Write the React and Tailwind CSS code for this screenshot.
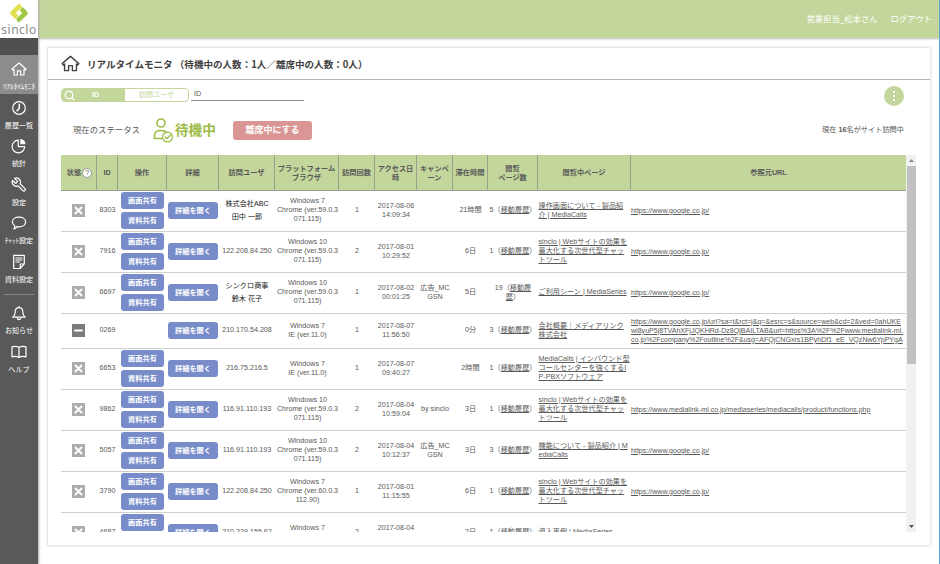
import React from "react";

const COLS =
  "grid grid-cols-[36px_21px_49px_52px_56px_64px_36px_42px_36px_35px_50px_93px_275px]";

const WEB = ["sinclo | Webサイトの効果を", "最大化する次世代型チャッ", "トツール"];
const GOOGLE = ["https://www.google.co.jp/"];
const CH59 = ["Chrome (ver.59.0.3", "071.115)"];

const ROWS = [
  { id: "8303", user: ["株式会社ABC", "田中 一郎"], named: true, pf: ["Windows 7", ...CH59], n: "1", at: ["2017-08-06", "14:09:34"], camp: [], stay: "21時間", pages: "5", page: ["操作画面について - 製品紹", "介 | MediaCalls"], ref: GOOGLE },
  { id: "7916", user: ["122.208.84.250"], pf: ["Windows 10", ...CH59], n: "2", at: ["2017-08-01", "10:29:52"], camp: [], stay: "6日", pages: "1", page: WEB, ref: GOOGLE },
  { id: "6697", user: ["シンクロ商事", "鈴木 花子"], named: true, pf: ["Windows 10", ...CH59], n: "1", at: ["2017-08-02", "00:01:25"], camp: ["広告_MC", "GSN"], stay: "5日", pages: "19", page: ["ご利用シーン | MediaSeries"], ref: GOOGLE },
  { id: "0269", away: true, user: ["210.170.54.208"], pf: ["Windows 7", "IE (ver.11.0)"], n: "1", at: ["2017-08-07", "11:56:50"], camp: [], stay: "0分", pages: "3", page: ["会社概要｜メディアリンク", "株式会社"], ref: ["https://www.google.co.jp/url?sa=t&rct=j&q=&esrc=s&source=web&cd=2&ved=0ahUKE", "wi8yuP5j8TVAhXFjJQKHRd-Dz8QjBAILTAB&url=https%3A%2F%2Fwww.medialink-ml.", "co.jp%2Fcompany%2Foutline%2F&usg=AFQjCNGxrs1BPyhDf1_eE_VQzNw6YpPYgA"] },
  { id: "6653", user: ["216.75.216.5"], pf: ["Windows 7", "IE (ver.11.0)"], n: "1", at: ["2017-08-07", "09:40:27"], camp: [], stay: "2時間", pages: "1", page: ["MediaCalls | インバウンド型", "コールセンターを強くするI", "P-PBXソフトウェア"], ref: [] },
  { id: "9862", user: ["116.91.110.193"], pf: ["Windows 10", ...CH59], n: "2", at: ["2017-08-04", "10:59:04"], camp: ["by sinclo"], stay: "3日", pages: "1", page: WEB, ref: ["https://www.medialink-ml.co.jp/mediaseries/mediacalls/product/functions.php"] },
  { id: "5057", user: ["116.91.110.193"], pf: ["Windows 10", ...CH59], n: "2", at: ["2017-08-04", "10:12:37"], camp: ["広告_MC", "GSN"], stay: "3日", pages: "3", page: ["機能について - 製品紹介 | M", "ediaCalls"], ref: GOOGLE },
  { id: "3790", user: ["122.208.84.250"], pf: ["Windows 7", "Chrome (ver.60.0.3", "112.90)"], n: "1", at: ["2017-08-01", "11:15:55"], camp: [], stay: "6日", pages: "1", page: WEB, ref: GOOGLE },
  { id: "4687", last: true, user: ["210.229.155.62"], pf: ["Windows 7"], n: "2", at: ["2017-08-04"], camp: [], stay: "2日", pages: "1", page: ["導入事例 | MediaSeries"], ref: [] },
];

const HEADERS = [
  ["ID"], ["操作"], ["詳細"], ["訪問ユーザ"], ["プラットフォーム", "ブラウザ"], ["訪問回数"],
  ["アクセス日", "時"], ["キャンペ", "ーン"], ["滞在時間"], ["閲覧", "ページ数"], ["閲覧中ページ"], ["参照元URL"],
];

function Lines({ lines, className = "" }) {
  return (
    <div className={`flex flex-col justify-center whitespace-nowrap ${className}`}>
      {lines.map((l, i) => <div key={i}>{l}</div>)}
    </div>
  );
}

function Svg({ className, children, vb = "0 0 16 16", sw = 1.2 }) {
  return (
    <svg className={className} viewBox={vb} fill="none" stroke="currentColor" strokeWidth={sw} strokeLinecap="round" strokeLinejoin="round">
      {children}
    </svg>
  );
}

const home = <path d="M1 8 8 2l7 6-1 1.2-1-.8V14H9.6V9.8H6.4V14H3V8.4l-1 .8z" />;

const ICONS = {
  home,
  clock: <><circle cx="8" cy="8" r="6.3" /><path d="M8.3 4.3v4L6 10.8" strokeWidth="1.5" /></>,
  pie: <><path d="M7.3 2.2a6.3 6.3 0 1 0 6.4 6.4H7.3z" /><path d="M9.3 1a5.6 5.6 0 0 1 5.2 5.3H9.3z" fill="currentColor" stroke="none" /></>,
  wrench: (
    <g transform="translate(16.400 -0.400) scale(-0.690 0.690)" strokeWidth="1.800">
      <path d="M14.700 6.300a1 1 0 0 0 0 1.400l1.600 1.600a1 1 0 0 0 1.400 0l3.770-3.770a6 6 0 0 1-7.940 7.940l-6.910 6.910a2.120 2.120 0 0 1-3-3l6.910-6.910a6 6 0 0 1 7.940-7.940l-3.760 3.760z" />
    </g>
  ),
  chat: <path d="M8 2.2c3.8 0 6.6 2 6.6 4.8S11.8 11.8 8 11.8c-.7 0-1.4-.1-2-.2-.8 1.3-1.7 2-3.1 2.3.7-1 .9-2 .8-3.2C2.3 9.8 1.4 8.5 1.4 7c0-2.8 2.8-4.8 6.6-4.8z" />,
  doc: <><path d="M2.7 1.3h10.6v8.500l-4.200 4.700H2.700zM9.200 14.300V10h4" /><path d="M4.800 4h6.300M4.800 6h6.300M4.800 8h3.800" strokeWidth="1" /></>,
  bell: <><path d="M8 1.300v1.200M8 2.600c-2.600 0-3.800 2-3.800 4.300 0 2.700-.7 3.600-2.400 5.300h12.400c-1.700-1.700-2.400-2.600-2.400-5.300 0-2.300-1.200-4.300-3.800-4.300z" /><path d="M6.300 13c.2 2.200 3.200 2.200 3.400 0" /></>,
  book: <path d="M8 3.500C6.300 2.300 3.600 2.200 1 2.800v10c2.600-.6 5.300-.4 7 .7 1.700-1.100 4.400-1.300 7-.7v-10c-2.600-.6-5.300-.5-7 .7zm0 0v10" />,
};

function NavItem({ icon, label, active }) {
  return (
    <div className={`flex h-[38.500px] shrink-0 flex-col items-center pt-[6px] text-white ${active ? "bg-[#8c8c8c]" : ""}`}>
      <Svg className="size-4 shrink-0">{ICONS[icon]}</Svg>
      <span className="mt-[5px] whitespace-nowrap text-[7.100px] leading-[10px]">{label}</span>
    </div>
  );
}

function Button({ children, className }) {
  return (
    <div className={`flex h-[17px] items-center justify-center whitespace-nowrap rounded-[3px] bg-[#788cca] text-[7.200px] font-bold text-white ${className}`}>
      {children}
    </div>
  );
}

function Row({ r }) {
  return (
    <div className={`${COLS} shrink-0 border-b border-[#cfcfcf] pb-[1px] text-center text-[7.150px] leading-[9px] ${r.away ? "h-[35px]" : "h-[41px]"}`}>
      <div className="flex items-center justify-center pb-[1px] pr-[1px]">
        <div className={`flex size-[13px] items-center justify-center text-white ${r.away ? "bg-[#7b7b7b]" : "bg-[#acacac]"}`}>
          <Svg className="size-[11px]" vb="0 0 11 11" sw={2}>
            {r.away ? <path d="M2 5.500h7" /> : <path d="M2.500 2.500l6 6M8.500 2.500l-6 6" />}
          </Svg>
        </div>
      </div>
      <Lines lines={[r.id]} />
      <div className={`flex flex-col items-center gap-[3px] pb-[1px] ${r.last ? "pt-[1px]" : "justify-center"}`}>
        {!r.away && <Button className="w-[43px]">画面共有</Button>}
        {!r.away && !r.last && <Button className="w-[43px]">資料共有</Button>}
      </div>
      <div className="flex items-center justify-center pb-[1px]"><Button className="w-[50px]">詳細を開く</Button></div>
      <Lines lines={r.user} className={r.named ? "leading-[13px] text-[#222]" : ""} />
      <Lines lines={r.pf} className={r.last ? "pb-[9px] pl-[1px]" : "pl-[1px]"} />
      <Lines lines={[r.n]} />
      <Lines lines={r.at} className={r.last ? "pb-[9px]" : ""} />
      <Lines lines={r.camp} />
      <Lines lines={[r.stay]} />
      <div className="flex flex-col justify-center whitespace-nowrap">
        {r.pages === "19" ? (
          <><div>19（<u>移動履</u></div><div><u>歴</u>）</div></>
        ) : (
          <div>{r.pages}（<u>移動履歴</u>）</div>
        )}
      </div>
      <Lines lines={r.page} className="items-start pl-[0.500px] text-left underline" />
      <Lines lines={r.ref} className="items-start pb-[1px] text-left text-[7.070px] underline" />
    </div>
  );
}

export default function App() {
  return (
    <div className="flex h-[564px] w-[940px] overflow-hidden border-r border-[#5fa3d8] bg-white font-['Liberation_Sans','Noto_Sans_CJK_JP',sans-serif] text-[#595959]">
      <aside className="z-10 flex w-[38px] shrink-0 flex-col bg-[#595959] shadow-[1px_0_2px_#aaa]">
        <div className="flex h-[38px] shrink-0 flex-col items-center bg-white pt-[3px]">
          <svg className="h-[20px] w-[20px] shrink-0" viewBox="0 0 20 20" fill="none" strokeWidth="4.600" strokeLinejoin="round">
            <path d="M12 2.600 10.300 3.300 3.500 10l4.300 4.400" stroke="#e2e04c" />
            <path d="M12.200 5.600 16.500 10l-6.800 6.700-1.700.7" stroke="#a3c846" />
          </svg>
          <span className="font-['Noto_Sans'] text-[12px] leading-[13px] tracking-[0.500px] text-[#8c8c8c]">sinclo</span>
        </div>
        <div className="h-[17px] shrink-0 bg-[#505050]" />
        <NavItem icon="home" label="ﾘｱﾙﾀｲﾑﾓﾆﾀ" active />
        <NavItem icon="clock" label="履歴一覧" />
        <NavItem icon="pie" label="統計" />
        <NavItem icon="wrench" label="設定" />
        <NavItem icon="chat" label="ﾁｬｯﾄ設定" />
        <NavItem icon="doc" label="資料設定" />
        <div className="mx-1 mb-[4px] mt-[8px] h-px shrink-0 bg-[#858585]" />
        <NavItem icon="bell" label="お知らせ" />
        <NavItem icon="book" label="ヘルプ" />
      </aside>
      <div className="flex min-w-0 flex-1 flex-col">
        <header className="flex h-[38px] shrink-0 items-center justify-end gap-[13px] bg-[#c3d69b] pr-[7px] text-[8.300px] text-white shadow-[0_1px_2px_#bbb]">
          <span>営業担当_松本さん</span>
          <span>ログアウト</span>
        </header>
        <main className="ml-[10px] mt-[10px] flex h-[497px] w-[882px] shrink-0 flex-col bg-white shadow-[0_0_2px_1px_#dcdcdc]">
          <div className="flex h-8 shrink-0 items-center border-b border-[#b5b5b5] pl-[13px] text-[#404040]">
            <Svg className="size-[19px]" sw={1.2}>{home}</Svg>
            <h1 className="ml-[7px] whitespace-nowrap font-['Noto_Sans_CJK_JP',sans-serif] text-[9.550px] font-bold leading-4">リアルタイムモニタ （待機中の人数：1人／離席中の人数：0人）</h1>
          </div>
          <div className="flex h-[26px] shrink-0 items-start pl-[13px] pr-[26px] pt-[6px]">
            <div className="mt-[2px] flex h-[14px] w-[128px] overflow-hidden rounded-[4px] border border-[#c3d69b] text-[7px] text-[#c3d69b]">
              <div className="flex w-[63px] items-center bg-[#c3d69b] font-bold text-white">
                <Svg className="ml-[2px] size-[11px]" vb="0 0 11 11" sw={1.3}><circle cx="5" cy="5" r="3.8" /><path d="M8 8l2 2" /></Svg>
                <span className="ml-[17px]">ID</span>
              </div>
              <div className="flex flex-1 items-center justify-center">訪問ユーザ</div>
            </div>
            <div className="ml-[2px] h-[15px] w-[113px] border-b border-[#8c8c8c] pl-[3px] text-[7.200px] leading-[15px]">ID</div>
            <div className="ml-auto flex size-5 flex-col items-center justify-center gap-[2px] rounded-full bg-[#c3d69b]">
              <i className="size-[2px] bg-white" /><i className="size-[2px] bg-white" /><i className="size-[2px] bg-white" />
            </div>
          </div>
          <div className="flex h-[49px] shrink-0 items-center pl-[25px] pr-[26px]">
            <span className="w-[80px] whitespace-nowrap text-[8.400px]">現在のステータス</span>
            <Svg className="h-[25px] w-[21px] text-[#9bbb45]" vb="0 0 21 25" sw={1.6}>
              <circle cx="8" cy="5" r="4" />
              <path d="M9 20.500H1.500v-3c0-3 2-5 6.500-5 3 0 4.500.8 5.500 2" />
              <circle cx="14.500" cy="19" r="4.900" strokeWidth="1.200" /><path d="M12.200 19l1.800 1.800 3.200-3.500" strokeWidth="1.300" />
            </Svg>
            <span className="ml-[1px] w-[58px] whitespace-nowrap text-[13.600px] font-bold leading-5 text-[#9bbb45]">待機中</span>
            <div className="flex h-[19px] w-[79px] items-center justify-center rounded-[3px] bg-[#d99694] text-[9px] font-bold text-white">離席中にする</div>
            <span className="ml-auto whitespace-nowrap text-[7.200px]">現在 <b>16</b>名がサイト訪問中</span>
          </div>
          <div className="ml-[13px] flex h-[377px] w-[855px] shrink-0">
            <div className="flex w-[845px] flex-col overflow-hidden">
              <div className={`${COLS} h-9 shrink-0 border-b border-[#9a9f8e] bg-[#c3d69b] text-center text-[7.200px] font-bold leading-[9px]`}>
                <div className="flex items-center justify-center gap-[1px] whitespace-nowrap border-r border-[#9a9f8e] pl-[2px]">
                  状態
                  <span className="flex size-[10px] items-center justify-center rounded-full border border-[#999] bg-white text-[7px] font-normal">?</span>
                </div>
                {HEADERS.map((h, i) => (
                  <Lines key={i} lines={h} className={i < 11 ? "border-r border-[#9a9f8e]" : ""} />
                ))}
              </div>
              {ROWS.map((r) => <Row key={r.id} r={r} />)}
            </div>
            <div className="flex w-[10px] flex-col items-center bg-[#f1f1f1]">
              <div className="flex h-[11px] items-center"><svg className="h-[3px] w-[5px]" viewBox="0 0 5 3"><path d="M0 3 2.500 0 5 3z" fill="#888" /></svg></div>
              <div className="h-[198px] w-[9px] bg-[#c1c1c1]" />
              <div className="mt-auto flex h-[11px] items-center"><svg className="h-[3px] w-[5px]" viewBox="0 0 5 3"><path d="M0 0 2.500 3 5 0z" fill="#505050" /></svg></div>
            </div>
          </div>
        </main>
      </div>
    </div>
  );
}
